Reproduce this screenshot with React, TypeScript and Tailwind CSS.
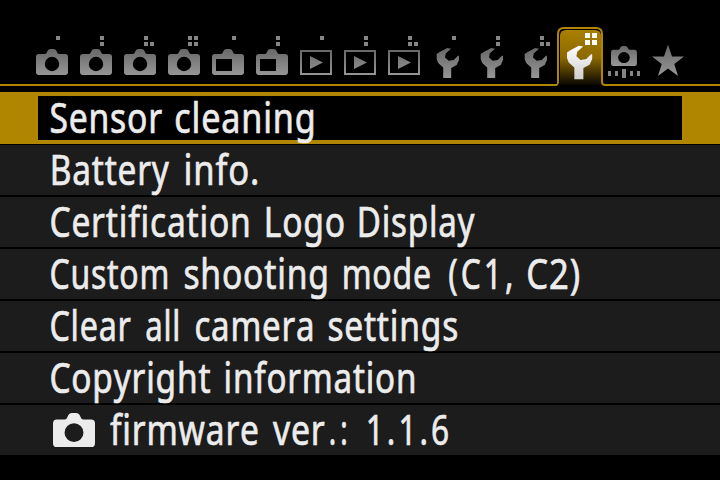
import { useLayoutEffect, useRef, useState } from "react";

const FONT = '"Noto Sans", sans-serif';
const SIZE = 41.5;

// A word is [text, left ink edge, right ink edge, letter spacing before scaling].
type WordSpec = [string, number, number, number?];

const rows: WordSpec[][] = [
  [["Sensor", 50.5, 161.5], ["cleaning", 175.5, 312.5]],
  [["Battery", 52.5, 169], ["info.", 185.5, 257]],
  [["Certification", 51, 248.5], ["Logo", 266.5, 342.5], ["Display", 359.5, 475]],
  [["Custom", 51, 167.5], ["shooting", 184.5, 326], ["mode", 344, 430], ["(C1,", 448.5, 511, 4], ["C2)", 527.5, 578]],
  [["Clear", 51, 131], ["all", 146, 178.5], ["camera", 196, 312], ["settings", 329, 457.5]],
  [["Copyright", 51, 210.5], ["information", 226, 414]],
  [["firmware", 110, 257.5], ["ver", 272.5, 324.5], [".:", 330, 346, 6], ["1.1.6", 367.5, 447, 4]],
];

function Word({ spec, gap }: { spec: WordSpec; gap: number }) {
  const [text, start, end, spacing = 1] = spec;
  const inner = useRef<HTMLSpanElement>(null);
  const [fit, setFit] = useState({ scale: 0.75, shift: 0 });
  useLayoutEffect(() => {
    const ctx = document.createElement("canvas").getContext("2d");
    if (!ctx || !inner.current) return;
    ctx.font = `${SIZE}px ${FONT}`;
    const first = ctx.measureText(text[0]);
    const last = ctx.measureText(text[text.length - 1]);
    const bearing = -first.actualBoundingBoxLeft;
    const trailing = last.width - last.actualBoundingBoxRight + spacing;
    const scale = (end - start) / (inner.current.offsetWidth - bearing - trailing);
    setFit({ scale, shift: -bearing * scale });
  }, [text, start, end, spacing]);
  return (
    <span className="block shrink-0 whitespace-pre" style={{ width: end - start, marginLeft: gap }}>
      <span
        ref={inner}
        className="inline-block origin-left [font-kerning:none] [-webkit-text-stroke:0.7px_#ececec]"
        style={{ letterSpacing: spacing, transform: `translateX(${fit.shift}px) scaleX(${fit.scale})` }}
      >
        {text}
      </span>
    </span>
  );
}

function Words({ words, origin }: { words: WordSpec[]; origin: number }) {
  return (
    <div className="flex h-full items-center pb-0.5 text-[41.5px] leading-[52px] text-[#ececec]" style={{ fontFamily: FONT }}>
      {words.map((w, i) => (
        <Word key={w[0]} spec={w} gap={w[1] - (i ? words[i - 1][2] : origin)} />
      ))}
    </div>
  );
}

const CAMERA = "M3 5H9Q10.3 5 11 3Q12 0 14.5 0H17.5Q20 0 21 3Q21.7 5 23 5H29Q32 5 32 8V23Q32 26 29 26H3Q0 26 0 23V8Q0 5 3 5Z";
const LENS = "M23.2 15a7.2 7.2 0 1 0-14.4 0a7.2 7.2 0 1 0 14.4 0Z";
const WRENCH = "M10.5 0L14.3 .8L9 5.5L8.3 9.5L12 12.8L17 12L21.5 7.5L22.3 8V12L20 17L14.5 20V30H6.5V19.5L1.5 15L0 11V6L3 4Z";

function Dots({ n }: { n: number }) {
  const cells = [[0, 0], [0, 6], [6, 6], [6, 0]].slice(0, n);
  return (
    <g fill="#858585">
      {cells.map(([x, y]) => (
        <rect key={`${x}-${y}`} x={x} y={y} width="4" height="4" />
      ))}
    </g>
  );
}

type Kind = "camera" | "movie" | "play" | "wrench";

function TabIcon({ kind, n }: { kind: Kind; n: number }) {
  return (
    <svg className="h-[56px] w-11 shrink-0" viewBox="0 -5 44 56">
      <g transform="translate(20 6)">
        <Dots n={n} />
      </g>
      <g fill="url(#steel)">
        {kind === "camera" && <path transform="translate(0 19)" fillRule="evenodd" d={CAMERA + LENS} />}
        {kind === "movie" && <path transform="translate(0 19)" fillRule="evenodd" d={CAMERA + "M4 10V22H20V10Z"} />}
        {kind === "play" && (
          <path fillRule="evenodd" d="M0 20H32V45H0ZM2 22V43H30V22ZM10 26L23 32.5L10 39Z" />
        )}
        {kind === "wrench" && <path transform="translate(4.7 18)" d={WRENCH} />}
      </g>
    </svg>
  );
}

const tabs: [Kind, number][] = [
  ["camera", 1], ["camera", 2], ["camera", 3], ["camera", 4], ["movie", 1], ["movie", 2],
  ["play", 1], ["play", 2], ["play", 3], ["wrench", 1], ["wrench", 2], ["wrench", 3],
];

function TabBar() {
  return (
    <div className="flex h-[92px] shrink-0 pt-[25px]">
      <svg className="h-0 w-0">
        <defs>
          <linearGradient id="steel" x1="0" y1="0" x2="0" y2="1">
            <stop offset="0" stopColor="#686868" />
            <stop offset="1" stopColor="#969696" />
          </linearGradient>
        </defs>
      </svg>
      <div className="flex h-[61px] w-[557px] shrink-0 overflow-hidden border-b-2 border-[#b08600] pl-9">
        {tabs.map(([kind, n], i) => (
          <TabIcon key={i} kind={kind} n={n} />
        ))}
      </div>
      <svg className="h-[67px] w-[163px] shrink-0" viewBox="557 25 163 67">
        <defs>
          <linearGradient id="tab" x1="0" y1="0" x2="0" y2="1">
            <stop offset="0" stopColor="#a98000" />
            <stop offset="0.5" stopColor="#8c6900" />
            <stop offset="1" stopColor="#080600" />
          </linearGradient>
          <linearGradient id="silver" x1="0" y1="0" x2="0" y2="1">
            <stop offset="0" stopColor="#fff" />
            <stop offset="1" stopColor="#cecece" />
          </linearGradient>
        </defs>
        <path d="M560 85V36Q560 30 566 30H595Q601 30 601 36V85Z" fill="url(#tab)" />
        <path d="M555 85Q558 85 558 82V34Q558 28 564 28H596Q602 28 602 34V82Q602 85 605 85H720" fill="none" stroke="#b08600" strokeWidth="2" />
        <g transform="translate(585 33)" fill="#fff">
          <rect width="5" height="5" />
          <rect x="7" width="5" height="5" />
          <rect y="7" width="5" height="5" />
          <rect x="7" y="7" width="5" height="5" />
        </g>
        <path transform="translate(567 45.7) scale(1.13 1.115)" d={WRENCH} fill="url(#silver)" />
        <path transform="translate(611 46) scale(.81 .77)" fillRule="evenodd" d={CAMERA + LENS} fill="url(#steel)" />
        <path d="M608 71h3v5h-3zM615 71h3v5h-3zM622 69h4v9h-4zM630 71h3v5h-3zM637 71h3v5h-3z" fill="#858585" />
        <path d="M668 44.5L672 56.5H684L674.3 64L678 76L668 68.6L658 76L661.7 64L652 56.5H664Z" fill="url(#steel)" />
      </svg>
    </div>
  );
}

export default function App() {
  return (
    <div className="flex h-[480px] w-[720px] flex-col overflow-hidden bg-black">
      <TabBar />
      <div className="h-[52px] shrink-0 bg-[#b08600] pt-1 pl-[38px]">
        <div className="h-11 w-[644px] bg-black">
          <Words words={rows[0]} origin={38} />
        </div>
      </div>
      {rows.slice(1, 6).map((words) => (
        <div key={words[0][0]} className="h-[52px] shrink-0 border-t border-b border-black bg-[#1c1c1c]">
          <Words words={words} origin={0} />
        </div>
      ))}
      <div className="flex h-[51px] shrink-0 border-t border-black bg-[#1c1c1c]">
        <svg className="h-[50px] w-[95px] shrink-0" viewBox="0 0 95 50">
          <path transform="translate(53 8) scale(1.3125 1.31)" fillRule="evenodd" d={CAMERA + LENS} fill="#ececec" />
        </svg>
        <Words words={rows[6]} origin={95} />
      </div>
    </div>
  );
}
